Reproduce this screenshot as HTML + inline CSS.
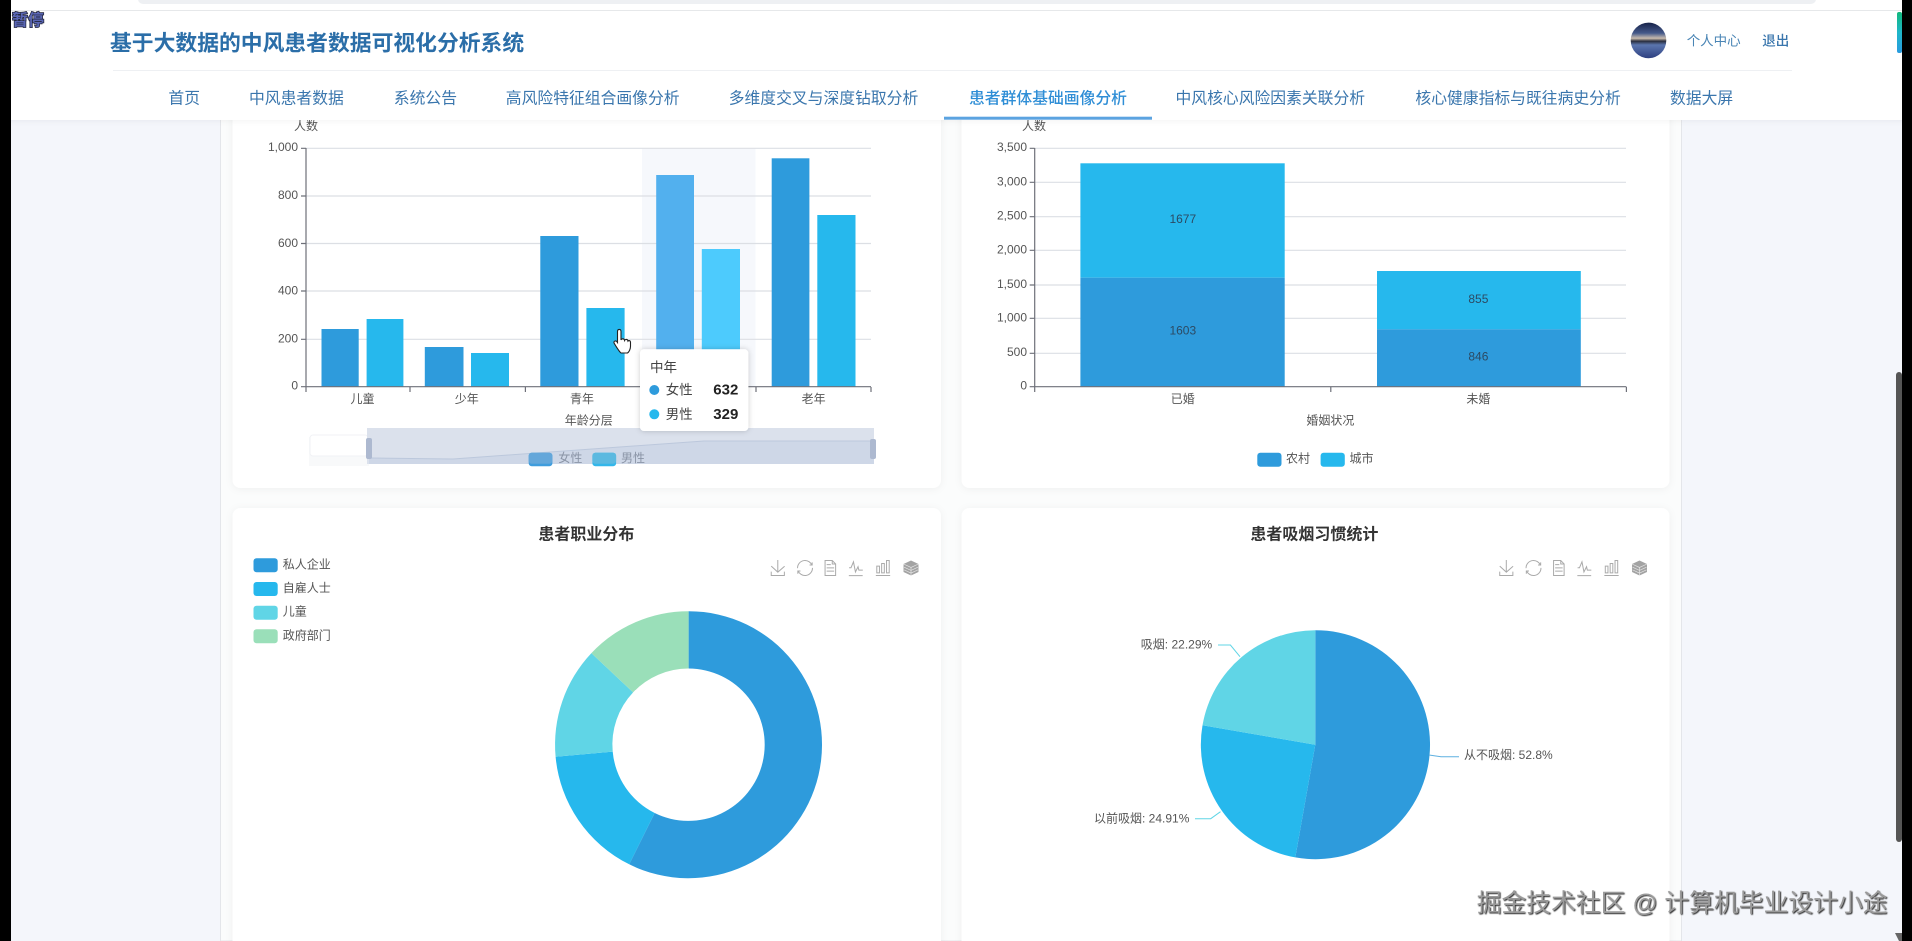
<!DOCTYPE html>
<html lang="zh-CN">
<head>
<meta charset="utf-8">
<title>基于大数据的中风患者数据可视化分析系统</title>
<style>
html,body{margin:0;padding:0;width:1912px;height:941px;overflow:hidden;background:#f4f6fb}
svg{display:block;position:absolute;left:0;top:0;filter:blur(.3px)}
text{font-family:"Liberation Sans","Noto Sans CJK SC",sans-serif;dominant-baseline:central}
.ax{font-size:12px;fill:#555}
.sm{font-size:12px;fill:#555}
.nav{font-size:15.8px;fill:#3a76ad}
.ttl{font-size:16px;font-weight:700;fill:#333}
.grid{stroke:#dcdfe4;stroke-width:1.2}
.axis{stroke:#6e7079;stroke-width:1.2;fill:none}
.ico{fill:none;stroke:#aaa;stroke-width:1;vector-effect:non-scaling-stroke}
</style>
</head>
<body>
<svg width="1912" height="941" viewBox="0 0 1912 941" xmlns="http://www.w3.org/2000/svg">
<defs>
<linearGradient id="av" x1="0" y1="0" x2="0" y2="1">
<stop offset="0" stop-color="#141f45"/><stop offset=".3" stop-color="#45598a"/>
<stop offset=".44" stop-color="#c9bcae"/><stop offset=".52" stop-color="#2b2f3f"/>
<stop offset=".62" stop-color="#5b75ae"/><stop offset="1" stop-color="#2b3d7e"/>
</linearGradient>
<linearGradient id="tg" x1="0" y1="0" x2="0" y2="1">
<stop offset="0" stop-color="#12b87c"/><stop offset=".5" stop-color="#1fb6c9"/><stop offset="1" stop-color="#2a9be0"/>
</linearGradient>
<g id="tools">
<g transform="translate(770 560) scale(.267)"><path class="ico" d="M4.7,22.9L29.3,45.5L54.7,23.4M4.6,43.6L4.6,58L53.8,58L53.8,43.6M29.2,45.1L29.2,0"/></g>
<g transform="translate(797 560) scale(.267)"><path class="ico" d="M47,18.9h9.8V8.7 M56.3,20.1 C52.1,9,40.5,0.6,26.8,2.1C12.6,3.7,1.6,16.2,2.1,30.6 M13,41.1H3.1v10.2 M3.7,39.9c4.2,11.1,15.8,19.5,29.5,18 c14.2-1.6,25.2-14.1,24.7-28.5"/></g>
<g transform="translate(822 560) scale(.267)"><path class="ico" d="M17.5,17.3H33 M45.4,29.5h-28 M11.5,2v56H51V14.8L38.4,2H11.5z M38.4,2.2v12.7H51 M45.4,41.7h-28"/></g>
<g transform="translate(848 560) scale(.267)"><path class="ico" d="M4.1,28.9h7.1l9.3-22l7.4,38l9.7-19.7l3,12.8h14.9M3.1,58.7L55,58.7"/></g>
<g transform="translate(875 560) scale(.267)"><path class="ico" d="M6.7,22.9h10V48h-10V22.9zM24.9,13h10v35h-10V13zM43.2,2h10v46h-10V2zM3.1,58h53.7"/></g>
<g transform="translate(903 560) scale(.267)">
<path d="M30 2L58 15V45L30 58L2 45V15Z" fill="#a3a3a3"/>
<path d="M2 15L30 28L58 15M4 27L30 39L56 27M4 37L30 49L56 37M30 28V58" fill="none" stroke="#e6e6e6" stroke-width="2.5"/>
</g>
</g>
<filter id="cs" x="-5%" y="-5%" width="110%" height="110%"><feDropShadow dx="0" dy="1" stdDeviation="4" flood-color="#000" flood-opacity=".05"/></filter>
<filter id="ts" x="-15%" y="-15%" width="130%" height="130%"><feDropShadow dx="0" dy="0" stdDeviation="3" flood-color="#000" flood-opacity=".2"/></filter>
<filter id="hs" x="-2%" y="-10%" width="104%" height="125%"><feDropShadow dx="0" dy="1" stdDeviation="3" flood-color="#000" flood-opacity=".05"/></filter>
<filter id="wm" x="-2%" y="-20%" width="104%" height="140%"><feDropShadow dx="1" dy="1" stdDeviation=".4" flood-color="#2a2a2a" flood-opacity="1"/></filter>
<clipPath id="avc"><circle cx="1648.5" cy="40.4" r="17.8"/></clipPath>
</defs>

<!-- page background -->
<rect width="1912" height="941" fill="#f4f6fb"/>
<rect x="220.500" y="100" width="1461" height="841" fill="#fbfcfc" stroke="#e4e6ea"/>

<!-- cards -->
<rect x="232.500" y="90" width="708.500" height="398" rx="8" fill="#fff" filter="url(#cs)"/>
<rect x="961.500" y="90" width="708" height="398" rx="8" fill="#fff" filter="url(#cs)"/>
<rect x="232.500" y="508" width="708.500" height="480" rx="8" fill="#fff" filter="url(#cs)"/>
<rect x="961.500" y="508" width="708" height="480" rx="8" fill="#fff" filter="url(#cs)"/>

<!-- chart 1 -->
<rect x="642" y="148" width="113.500" height="239" fill="#f6f8fc"/>
<g class="grid">
<line x1="306" x2="871" y1="148.300" y2="148.300"/><line x1="306" x2="871" y1="196" y2="196"/>
<line x1="306" x2="871" y1="243.500" y2="243.500"/><line x1="306" x2="871" y1="291" y2="291"/>
<line x1="306" x2="871" y1="339.300" y2="339.300"/>
</g>
<g fill="#2e9bdc">
<rect x="321.500" y="329" width="37.200" height="58"/><rect x="424.800" y="347" width="38.700" height="40"/>
<rect x="540.300" y="236" width="38.200" height="151"/><rect x="771.700" y="158.300" width="37.700" height="228.700"/>
</g>
<g fill="#26b8ed">
<rect x="366.600" y="319" width="36.800" height="68"/><rect x="471" y="353" width="38" height="34"/>
<rect x="586.400" y="308" width="38.200" height="79"/><rect x="817.300" y="215" width="38.200" height="172"/>
</g>
<rect x="656.200" y="175" width="37.800" height="212" fill="#52b0ee"/>
<rect x="701.800" y="249" width="38.200" height="138" fill="#4dcbfd"/>
<path class="axis" d="M306 148V392M301 148.300H306M301 196H306M301 243.500H306M301 291H306M301 339.300H306M301 386.700H871M410 387V392M525.400 387V392M641 387V392M756 387V392M871 387V392"/>
<g class="ax" text-anchor="end">
<text x="298" y="147">1,000</text><text x="298" y="195">800</text><text x="298" y="243">600</text>
<text x="298" y="290.500">400</text><text x="298" y="338.500">200</text><text x="298" y="385.500">0</text>
</g>
<g class="ax" text-anchor="middle">
<text x="306" y="126">人数</text><text x="362.500" y="399">儿童</text><text x="466.700" y="399">少年</text>
<text x="582" y="399">青年</text><text x="698" y="399">中年</text><text x="813.600" y="399">老年</text><text x="588.700" y="420.700">年龄分层</text>
</g>

<!-- data zoom -->
<rect x="309" y="437" width="60" height="29" fill="#f8f9fa"/>
<rect x="310" y="435" width="58" height="21" rx="3" fill="#fff" stroke="#f1f2f5"/>
<rect x="367" y="428" width="507" height="36" fill="#dbe1ec"/>
<path d="M369 458L453 459L704 441L874 441V464H369Z" fill="#ced7e7"/>
<path d="M369 458L453 459L704 441L874 441" fill="none" stroke="#bcc8dc"/>
<rect x="366" y="438" width="6" height="21" rx="2" fill="#adb9d0"/>
<rect x="870" y="439" width="6" height="20" rx="2" fill="#adb9d0"/>
<rect x="528.700" y="452.700" width="23.700" height="13.500" rx="3" fill="#3f9ddd"/>
<rect x="528.700" y="452.700" width="23.700" height="11" rx="3" fill="#64a7da"/>
<text x="558.400" y="458" class="sm" style="fill:#8a94a6">女性</text>
<rect x="592.400" y="452.700" width="23.700" height="13.500" rx="3" fill="#33b7ea"/>
<rect x="592.400" y="452.700" width="23.700" height="11" rx="3" fill="#5cb9e0"/>
<text x="621" y="458" class="sm" style="fill:#8a94a6">男性</text>

<!-- tooltip -->
<rect x="640" y="349.300" width="108.400" height="81.700" rx="4" fill="#fff" filter="url(#ts)"/>
<text x="650" y="367.700" style="font-size:13.500px" fill="#444">中年</text>
<circle cx="654.300" cy="390" r="5" fill="#2e9bdc"/>
<text x="665.700" y="390" style="font-size:13.500px" fill="#444">女性</text>
<text x="738.300" y="390" text-anchor="end" style="font-size:15px;font-weight:700" fill="#222">632</text>
<circle cx="654.300" cy="414.300" r="5" fill="#26b8ed"/>
<text x="665.700" y="414.300" style="font-size:13.500px" fill="#444">男性</text>
<text x="738.300" y="414.300" text-anchor="end" style="font-size:15px;font-weight:700" fill="#222">329</text>

<!-- cursor -->
<path d="M617.500 331.500c0-2.800 3.500-2.800 3.500 0v8.500c.6-1.700 3.400-1.700 3.600.4.800-1.500 3.200-1.200 3.400.7.900-1 2.500-.5 2.500 1.200v4c0 3-1.500 5.700-3 6.700h-6.500c-1.500-1.200-3-3.600-4.800-6.400l-2-3.300c-1.100-1.900 1.300-3.200 2.800-1.500l.5.700z" fill="#fff" stroke="#222" stroke-width="1.100"/>

<!-- chart 2 -->
<g class="grid">
<line x1="1035" x2="1626" y1="148.300" y2="148.300"/><line x1="1035" x2="1626" y1="182.300" y2="182.300"/>
<line x1="1035" x2="1626" y1="216.700" y2="216.700"/><line x1="1035" x2="1626" y1="250.300" y2="250.300"/>
<line x1="1035" x2="1626" y1="285" y2="285"/><line x1="1035" x2="1626" y1="318.300" y2="318.300"/>
<line x1="1035" x2="1626" y1="353.300" y2="353.300"/>
</g>
<rect x="1080.400" y="163.300" width="204.300" height="114.400" fill="#26b8ed"/>
<rect x="1080.400" y="277.700" width="204.300" height="109" fill="#2e9bdc"/>
<rect x="1377" y="271" width="203.800" height="58.300" fill="#26b8ed"/>
<rect x="1377" y="329.300" width="203.800" height="57.400" fill="#2e9bdc"/>
<path class="axis" d="M1034.700 148V392M1029.700 148.300H1034.700M1029.700 182.300H1034.700M1029.700 216.700H1034.700M1029.700 250.300H1034.700M1029.700 285H1034.700M1029.700 318.300H1034.700M1029.700 353.300H1034.700M1029.700 386.700H1626.400M1330.800 387V392M1626.400 387V392"/>
<g class="ax" text-anchor="end">
<text x="1027" y="147">3,500</text><text x="1027" y="181.500">3,000</text><text x="1027" y="215.500">2,500</text>
<text x="1027" y="249.500">2,000</text><text x="1027" y="284">1,500</text><text x="1027" y="317.500">1,000</text>
<text x="1027" y="352">500</text><text x="1027" y="385.500">0</text>
</g>
<g class="ax" text-anchor="middle">
<text x="1034" y="126">人数</text><text x="1182.800" y="399">已婚</text><text x="1478.400" y="399">未婚</text>
<text x="1330.400" y="420.700">婚姻状况</text>
</g>
<g text-anchor="middle" fill="#2c4a63">
<text x="1182.800" y="219" style="font-size:12px">1677</text><text x="1182.800" y="330.700" style="font-size:12px">1603</text>
<text x="1478.400" y="299" style="font-size:12px">855</text><text x="1478.400" y="356.700" style="font-size:12px">846</text>
</g>
<rect x="1257.300" y="452.700" width="24.200" height="14" rx="3" fill="#2e9bdc"/>
<text x="1286" y="458.500" class="sm">农村</text>
<rect x="1320.600" y="452.700" width="24.200" height="14" rx="3" fill="#26b8ed"/>
<text x="1349.500" y="458.500" class="sm">城市</text>

<!-- chart 3 -->
<text x="586.400" y="535" text-anchor="middle" class="ttl">患者职业分布</text>
<rect x="253.500" y="558.300" width="24.200" height="14" rx="3" fill="#2e9bdc"/>
<rect x="253.500" y="582" width="24.200" height="14" rx="3" fill="#26b8ed"/>
<rect x="253.500" y="605.700" width="24.200" height="14" rx="3" fill="#60d5e6"/>
<rect x="253.500" y="629.300" width="24.200" height="14" rx="3" fill="#9adfb9"/>
<text x="282.800" y="564.500" class="sm">私人企业</text>
<text x="282.800" y="588" class="sm">自雇人士</text>
<text x="282.800" y="611.500" class="sm">儿童</text>
<text x="282.800" y="635.500" class="sm">政府部门</text>
<use href="#tools"/>
<path d="M688.600 611.200A133.500 133.500 0 1 1 629.200 864.300L654.700 813A76.200 76.200 0 1 0 688.600 668.500Z" fill="#2e9bdc"/>
<path d="M629.200 864.300A133.500 133.500 0 0 1 555.600 756.800L612.700 751.600A76.200 76.200 0 0 0 654.700 813Z" fill="#26b8ed"/>
<path d="M555.600 756.800A133.500 133.500 0 0 1 591.400 653.100L633.100 692.400A76.200 76.200 0 0 0 612.700 751.600Z" fill="#60d5e6"/>
<path d="M591.400 653.100A133.500 133.500 0 0 1 688.600 611.200V668.500A76.200 76.200 0 0 0 633.100 692.400Z" fill="#9adfb9"/>

<!-- chart 4 -->
<text x="1314.400" y="535" text-anchor="middle" class="ttl">患者吸烟习惯统计</text>
<use href="#tools" transform="translate(728.500 0)"/>
<path d="M1315.300 630.200A114.500 114.500 0 1 1 1295.300 857.400L1315.300 744.700Z" fill="#2e9bdc"/>
<path d="M1295.300 857.400A114.500 114.500 0 0 1 1202.500 725.300L1315.300 744.700Z" fill="#26b8ed"/>
<path d="M1202.500 725.300A114.500 114.500 0 0 1 1315.300 630.200V744.700Z" fill="#60d5e6"/>
<path d="M1218 645H1230.400L1240 656.700" fill="none" stroke="#60d5e6"/>
<path d="M1429 755L1441 756.700H1459" fill="none" stroke="#5fb0e0"/>
<path d="M1195 818.700H1210.700L1220.500 811.700" fill="none" stroke="#60d5e6"/>
<text x="1140.800" y="644.300" class="sm">吸烟: 22.29%</text>
<text x="1464" y="755" class="sm">从不吸烟: 52.8%</text>
<text x="1094" y="818.300" class="sm">以前吸烟: 24.91%</text>

<!-- header -->
<rect x="0" y="0" width="1912" height="120" fill="#fff" filter="url(#hs)"/>
<rect x="138" y="-6" width="1678" height="10" rx="5" fill="#eef0f3"/>
<line x1="0" x2="1912" y1="10.500" y2="10.500" stroke="#e6e8ea"/>
<text x="110" y="43" style="font-size:21.800px;font-weight:700" fill="#2b6ea8">基于大数据的中风患者数据可视化分析系统</text>
<line x1="113" x2="1792" y1="70.500" y2="70.500" stroke="#eef0f3"/>
<g clip-path="url(#avc)"><rect x="1630" y="22" width="37" height="37" fill="url(#av)"/></g>
<text x="1686.700" y="41" style="font-size:13.500px" fill="#4a85b5">个人中心</text>
<text x="1762.300" y="41" style="font-size:13.500px;font-weight:500" fill="#3a76ad">退出</text>

<g>
<text x="168.400" y="99" class="nav">首页</text>
<text x="249" y="99" class="nav">中风患者数据</text>
<text x="393.800" y="99" class="nav">系统公告</text>
<text x="505.800" y="99" class="nav">高风险特征组合画像分析</text>
<text x="728.700" y="99" class="nav">多维度交叉与深度钻取分析</text>
<text x="969" y="99" class="nav" style="fill:#2f8ed6;font-weight:500">患者群体基础画像分析</text>
<text x="1175.500" y="99" class="nav">中风核心风险因素关联分析</text>
<text x="1415.400" y="99" class="nav">核心健康指标与既往病史分析</text>
<text x="1670" y="99" class="nav">数据大屏</text>
</g>
<rect x="944" y="116.700" width="208" height="3" fill="#5ba3e0"/>

<!-- right edge -->
<rect x="1897" y="12" width="5" height="41" rx="2" fill="url(#tg)"/>
<rect x="1896" y="372" width="6" height="470" rx="3" fill="#555"/>
<path d="M1895 933H1902V941H1899Z" fill="#666"/>
<rect x="1902" y="0" width="10" height="941" fill="#000"/>
<rect x="0" y="0" width="11" height="941" fill="#000"/>

<!-- overlays -->
<text x="12" y="21" style="font-size:16px;font-weight:700;paint-order:stroke;stroke:#23263a;stroke-width:1.500px" fill="#5a66b5">暂停</text>
<text x="1476.700" y="904" style="font-size:24.800px" fill="#9a9a9a" filter="url(#wm)">掘金技术社区 @ 计算机毕业设计小途</text>
</svg>
</body>
</html>
